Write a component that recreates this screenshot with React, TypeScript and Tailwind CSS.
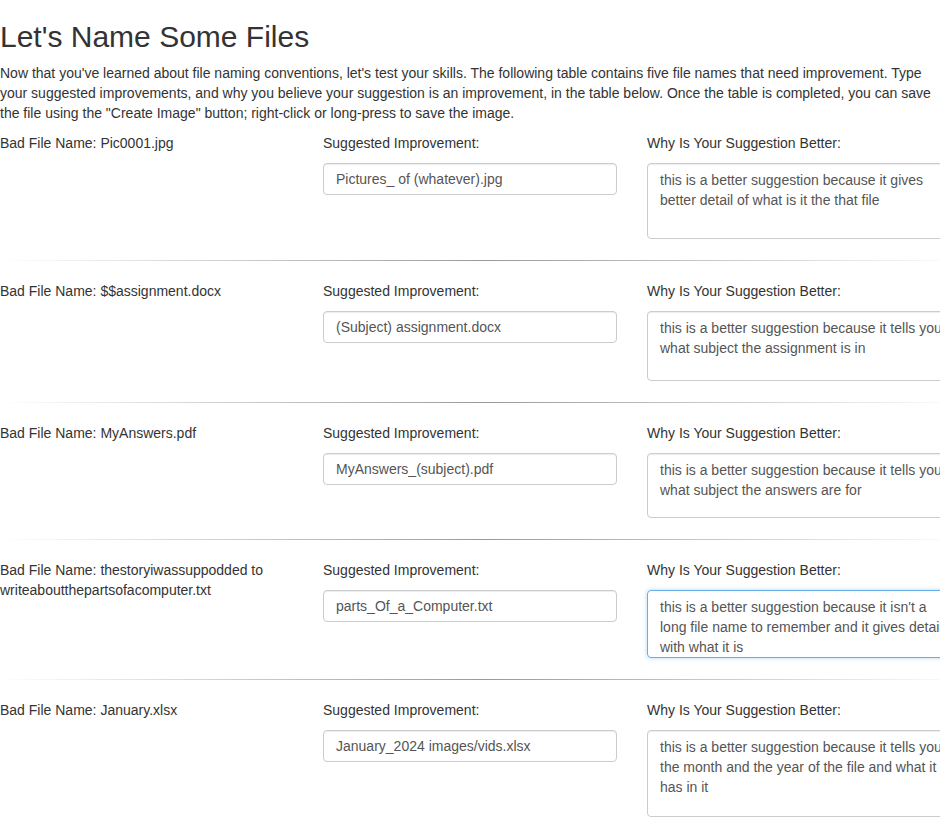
const rows = [
  {
    bad: 'Pic0001.jpg',
    suggested: 'Pictures_ of (whatever).jpg',
    why: 'this is a better suggestion because it gives better detail of what is it the that file',
    h: 'h-[76px]',
  },
  {
    bad: '$$assignment.docx',
    suggested: '(Subject) assignment.docx',
    why: 'this is a better suggestion because it tells you what subject the assignment is in',
    h: 'h-[70px]',
  },
  {
    bad: 'MyAnswers.pdf',
    suggested: 'MyAnswers_(subject).pdf',
    why: 'this is a better suggestion because it tells you what subject the answers are for',
    h: 'h-[65px]',
  },
  {
    bad: 'thestoryiwassuppodded to writeaboutthepartsofacomputer.txt',
    suggested: 'parts_Of_a_Computer.txt',
    why: "this is a better suggestion because it isn't a long file name to remember and it gives details with what it is",
    h: 'h-[68px]',
    focused: true,
  },
  {
    bad: 'January.xlsx',
    suggested: 'January_2024 images/vids.xlsx',
    why: 'this is a better suggestion because it tells you the month and the year of the file and what it has in it',
    h: 'h-[87px]',
  },
];

const App = () => {
  return (
    <div className="w-full overflow-x-hidden bg-white font-['Liberation_Sans',Arial,sans-serif] text-[14px] leading-[20px] text-[#333]">
      <h2 className="mt-5 mb-2.5 text-[30px] leading-[33px] font-normal">Let&apos;s Name Some Files</h2>
      <p className="mb-2.5 w-[940px]">
        Now that you&apos;ve learned about file naming conventions, let&apos;s test your skills. The following table
        contains five file names that need improvement. Type your suggested improvements, and why you believe your
        suggestion is an improvement, in the table below. Once the table is completed, you can save the file using the
        &quot;Create Image&quot; button; right-click or long-press to save the image.
      </p>
      <div className="w-[970px]">
        {rows.map((row, i) => (
          <div key={i}>
            {i > 0 && <div className="mt-[21px] mb-5 h-px bg-gradient-to-r from-transparent via-[#999] to-transparent" />}
            <div className="grid grid-cols-[293px_294px_322px] gap-x-[30px] items-start">
              <div>Bad File Name: {row.bad}</div>
              <div className="flex flex-col gap-2.5">
                <div>Suggested Improvement:</div>
                <input
                  readOnly
                  value={row.suggested}
                  className="h-[32px] w-full rounded border border-[#ccc] px-3 text-[#555] shadow-[inset_0_1px_1px_rgba(0,0,0,0.075)] outline-none"
                />
              </div>
              <div className="flex flex-col gap-2.5">
                <div>Why Is Your Suggestion Better:</div>
                <textarea
                  readOnly
                  value={row.why}
                  className={`${row.h} w-full resize-none overflow-hidden rounded border px-3 py-1.5 text-[#555] outline-none ${
                    row.focused
                      ? 'border-[#66afe9] shadow-[0_0_4px_rgba(102,175,233,0.5)]'
                      : 'border-[#ccc] shadow-[inset_0_1px_1px_rgba(0,0,0,0.075)]'
                  }`}
                />
              </div>
            </div>
          </div>
        ))}
      </div>
    </div>
  );
};

export default App;
